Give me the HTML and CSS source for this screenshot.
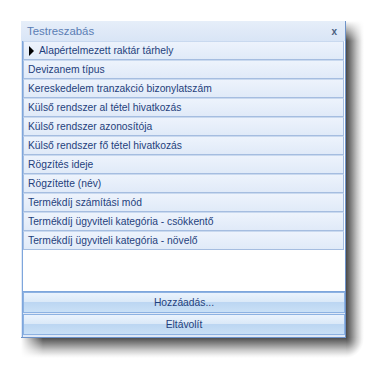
FILE: index.html
```html
<!DOCTYPE html>
<html>
<head>
<meta charset="utf-8">
<link rel="stylesheet" href="styles.css">
</head>
<body>
<div class="frame">
  <div class="window">
    <div class="titlebar">
      <span class="title">Testreszabás</span>
      <span class="close">x</span>
    </div>
    <div class="panel">
      <div class="list">
        <div class="row current"><span class="arrow"></span>Alapértelmezett raktár tárhely</div>
        <div class="row">Devizanem típus</div>
        <div class="row">Kereskedelem tranzakció bizonylatszám</div>
        <div class="row">Külső rendszer al tétel hivatkozás</div>
        <div class="row">Külső rendszer azonosítója</div>
        <div class="row">Külső rendszer fő tétel hivatkozás</div>
        <div class="row">Rögzítés ideje</div>
        <div class="row">Rögzítette (név)</div>
        <div class="row">Termékdíj számítási mód</div>
        <div class="row">Termékdíj ügyviteli kategória - csökkentő</div>
        <div class="row">Termékdíj ügyviteli kategória - növelő</div>
      </div>
      <div class="buttons">
        <div class="btn">Hozzáadás...</div>
        <div class="btn">Eltávolít</div>
      </div>
    </div>
  </div>
  <div class="shade-right"></div>
  <div class="shade-bottom"></div>
  <div class="shade-corner"></div>
</div>
</body>
</html>
```
FILE: styles.css
```css
html, body {
  margin: 0;
  padding: 0;
  background: #ffffff;
}
body {
  padding: 21px 0 0 21px;
  font-family: "Liberation Sans", Arial, sans-serif;
  font-size: 10.3px;
}
.frame {
  display: grid;
  grid-template-columns: 325px 18px;
  grid-template-rows: 317px 20px;
}
.window {
  grid-column: 1;
  grid-row: 1;
  box-sizing: border-box;
  background: #dfe9f7;
  border-right: 1px solid #6e93c9;
  border-bottom: 1px solid #6e93c9;
  display: flex;
  flex-direction: column;
}
.shade-right {
  grid-column: 2;
  grid-row: 1;
  background:
    linear-gradient(to bottom, #ffffff 0, rgba(255, 255, 255, 0) 20px),
    linear-gradient(to right, #4a4a4a 0, #7a7a7a 25%, #c4c4c4 60%, #f4f4f4 88%, #ffffff 100%);
}
.shade-bottom {
  grid-column: 1;
  grid-row: 2;
  background:
    linear-gradient(to right, #ffffff 0, rgba(255, 255, 255, 0) 22px),
    linear-gradient(to bottom, #505050 0, #808080 25%, #c8c8c8 60%, #f4f4f4 88%, #ffffff 100%);
}
.shade-corner {
  grid-column: 2;
  grid-row: 2;
  background: radial-gradient(ellipse 18px 20px at 0 0, #4d4d4d 0, #7d7d7d 25%, #c6c6c6 60%, #f4f4f4 88%, #ffffff 100%);
}
.titlebar {
  height: 20px;
  display: flex;
  align-items: center;
  justify-content: space-between;
  padding: 0 8px 0 6px;
  background: linear-gradient(#e6eef9, #d9e5f6);
}
.title {
  color: #5a7db4;
  font-size: 11.4px;
}
.close {
  color: #4a5f80;
  font-weight: bold;
  font-size: 10px;
}
.panel {
  flex: 1;
  display: flex;
  flex-direction: column;
  border-left: 1px solid #7ea6dc;
  margin-left: 1px;
  background: #ffffff;
}
.list {
  flex: 1;
  display: flex;
  flex-direction: column;
  background: #ffffff;
  padding-right: 1px;
}
.row {
  height: 17px;
  border: 1px solid #a5bde0;
  border-top-color: #c9d9ef;
  background: linear-gradient(#edf3fc, #e0eaf8);
  color: #1f3f7c;
  display: flex;
  align-items: center;
  padding-left: 4px;
  white-space: nowrap;
}
.arrow {
  width: 0;
  height: 0;
  border-top: 5px solid transparent;
  border-bottom: 5px solid transparent;
  border-left: 5px solid #000000;
  margin: 0 5px 0 1px;
}
.buttons {
  display: flex;
  flex-direction: column;
  gap: 1px;
  padding-bottom: 2px;
  background: #dfe9f7;
  border-top: 1px solid #7ea6dc;
}
.btn {
  height: 19px;
  border: 1px solid #8db2e2;
  background: linear-gradient(#eaf3fd 0%, #dbe9f8 45%, #bcd6f2 50%, #c9e0f6 100%);
  color: #1f3f7c;
  display: flex;
  align-items: center;
  justify-content: center;
}
```
